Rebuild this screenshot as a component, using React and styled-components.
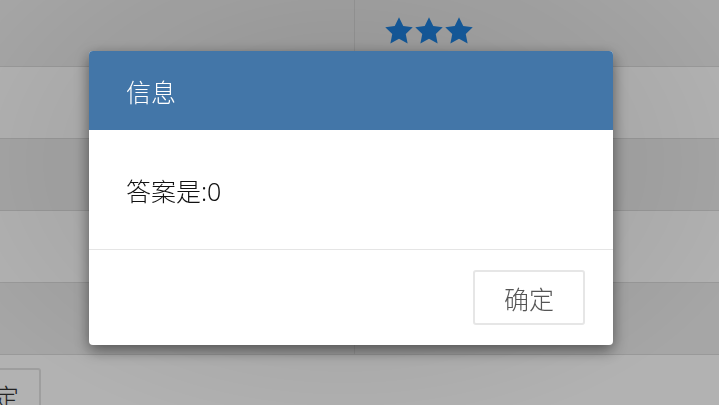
import React from "react";
import styled, { createGlobalStyle } from "styled-components";

const GlobalStyle = createGlobalStyle`
  html, body { margin: 0; padding: 0; background: #fff; overflow: hidden; }
  body { font-family: "Noto Sans", "Noto Sans CJK SC", sans-serif; }
  * { box-sizing: border-box; }
`;

const Page = styled.div`
  width: 719px;
  height: 405px;
  overflow: hidden;
`;

const Table = styled.div`
  display: flex;
  flex-direction: column;
  width: 100%;
`;

const Row = styled.div`
  display: grid;
  grid-template-columns: 354px 1fr;
  height: ${(p) => p.$h}px;
  background: ${(p) => (p.$striped ? "#eeeeee" : "#ffffff")};
  border-bottom: 1px solid #dcdcdc;
`;

const Cell = styled.div`
  display: flex;
  align-items: center;
  padding-left: 29px;
  & + & { border-left: 1px solid #dcdcdc; }
`;

const Stars = styled.div`
  display: flex;
  gap: 0;
  margin-top: -4px;
`;

const Actions = styled.div`
  padding-top: 13px;
`;

const PageButton = styled.button`
  margin-left: -46px;
  width: 87px;
  height: 55px;
  border: 2px solid #e2e2e2;
  border-radius: 3px;
  background: #fff;
  color: #333;
  font: 300 25px "Noto Sans CJK SC", sans-serif;
  text-align: right;
  padding: 0 20px 0 0;
`;

const Backdrop = styled.div`
  position: fixed;
  inset: 0;
  background: radial-gradient(ellipse 60% 70% at 48% 40%, rgba(0,0,0,0.4) 0%, rgba(0,0,0,0.3) 100%);
`;

const Dialog = styled.div`
  position: fixed;
  left: 89px;
  top: 51px;
  width: 524px;
  background: #fff;
  border-radius: 4px;
  overflow: hidden;
  box-shadow: 0 5px 15px rgba(0,0,0,0.5);
`;

const Header = styled.div`
  height: 79px;
  background: #4376a8;
  color: #fff;
  display: flex;
  align-items: center;
  padding: 0 37px;
  font: 300 25px "Noto Sans CJK SC", sans-serif;
`;

const Body = styled.div`
  height: 120px;
  display: flex;
  align-items: center;
  padding: 0 37px;
  font: 300 25px "Noto Sans", "Noto Sans CJK SC", sans-serif;
  color: #111;
  border-bottom: 1px solid #e5e5e5;
`;

const Footer = styled.div`
  display: flex;
  justify-content: flex-end;
  padding: 20px 28px 20px;
`;

const DialogButton = styled.button`
  width: 112px;
  height: 55px;
  border: 2px solid #e6e6e6;
  border-radius: 3px;
  background: #fff;
  color: #555;
  font: 300 25px "Noto Sans CJK SC", sans-serif;
  cursor: pointer;
`;

const Star = () => (
  <svg width="30" height="30" viewBox="0 0 24 24">
    <polygon
      fill="#1f86e6"
      points="12,1 15.4,8 23,9 17.4,14.3 18.9,22 12,18.2 5.1,22 6.6,14.3 1,9 8.6,8"
    />
  </svg>
);

const rows = [
  { h: 67, striped: true, stars: 3 },
  { h: 72, striped: false },
  { h: 72, striped: true },
  { h: 72, striped: false },
  { h: 72, striped: true },
];

export default function App() {
  return (
    <Page>
      <GlobalStyle />
      <Table>
        {rows.map((r, i) => (
          <Row key={i} $h={r.h} $striped={r.striped}>
            <Cell />
            <Cell>
              {r.stars ? (
                <Stars>
                  {Array.from({ length: r.stars }).map((_, j) => (
                    <Star key={j} />
                  ))}
                </Stars>
              ) : null}
            </Cell>
          </Row>
        ))}
      </Table>
      <Actions>
        <PageButton>确定</PageButton>
      </Actions>
      <Backdrop />
      <Dialog>
        <Header>信息</Header>
        <Body>答案是:0</Body>
        <Footer>
          <DialogButton>确定</DialogButton>
        </Footer>
      </Dialog>
    </Page>
  );
}
